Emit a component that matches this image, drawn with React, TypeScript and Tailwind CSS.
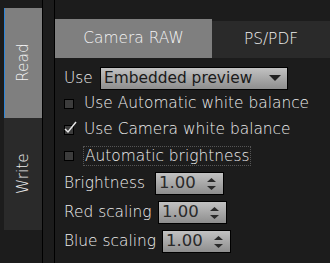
import React from 'react';

const font = { fontFamily: '"DejaVu Sans", sans-serif' };

function Check({ checked = false }: { checked?: boolean }) {
  return (
    <span className="relative w-[10px] h-[10px] bg-[#3c3c3c] border border-black shrink-0">
      {checked && (
        <svg className="absolute -left-[2px] -top-[5px]" width="15" height="14" viewBox="0 0 15 14">
          <path d="M2 8 L5 11 L13 1" fill="none" stroke="#e8e8e8" strokeWidth="1.5" />
        </svg>
      )}
    </span>
  );
}

function Spin({ value }: { value: string }) {
  return (
    <div className="flex items-center w-[69px] h-[23px] shrink-0 border border-black bg-gradient-to-b from-[#c2c2c2] to-[#8e8e8e] pl-[3px] pr-[6px] text-[#2a2a2a] text-[16.5px] font-normal">
      <span className="flex-1 leading-none">{value}</span>
      <svg width="11" height="14" viewBox="0 0 11 14">
        <path d="M1 5 L5.5 1 L10 5 Z" fill="#2a2a2a" />
        <path d="M1 9 L5.5 13 L10 9 Z" fill="#2a2a2a" />
      </svg>
    </div>
  );
}

export default function App() {
  return (
    <div className="w-[330px] h-[263px] bg-[#1c1c1c] flex text-[15.4px] font-extralight text-[#efefef] overflow-hidden" style={font}>
      {/* side tabs */}
      <div className="w-[43px] pl-[4px] pt-[8px] flex flex-col border-r border-black">
        <div className="h-[110px] bg-[#7f7f7f] border-l border-[#2f86d8] flex items-center justify-center">
          <span className="-rotate-90 whitespace-nowrap text-[#f2f2f2]">Read</span>
        </div>
        <div className="h-[112px] bg-[#2a2a2a] flex items-center justify-center">
          <span className="-rotate-90 whitespace-nowrap text-[#ececec]">Write</span>
        </div>
      </div>

      <div className="w-[11px]" />

      {/* main panel */}
      <div className="flex-1 flex flex-col border-l border-black pt-[19px]">
        <div className="flex h-[39px]">
          <div className="w-[157px] bg-[#7f7f7f] flex items-center justify-center text-[#f4f4f4]">Camera RAW</div>
          <div className="flex-1 mt-[2px] bg-[#2a2a2a] flex items-center justify-center">PS/PDF</div>
        </div>

        <div className="pl-[9px] pt-[9px] flex flex-col">
          <div className="flex items-center h-[23px]">
            <span className="w-[36px]">Use</span>
            <div className="flex items-center w-[188px] h-[23px] shrink-0 border border-black bg-gradient-to-b from-[#c2c2c2] to-[#8e8e8e] pl-[3px] pr-[6px] text-[#1a1a1a] font-normal">
              <span className="flex-1 leading-none">Embedded preview</span>
              <svg width="12" height="7" viewBox="0 0 12 7">
                <path d="M0 0 L12 0 L6 6 Z" fill="#222" />
              </svg>
            </div>
          </div>

          <div className="flex items-center gap-[10px] h-[26px] mt-[1px]">
            <Check />
            <span>Use Automatic white balance</span>
          </div>
          <div className="flex items-center gap-[10px] h-[26px]">
            <Check checked />
            <span>Use Camera white balance</span>
          </div>
          <div className="flex items-center gap-[9px] h-[25px]">
            <Check />
            <span className="border border-dotted border-[#555] px-[1px] leading-[18px]">Automatic brightness</span>
          </div>

          <div className="flex items-center h-[29px] mt-[1px]">
            <span className="w-[91px]">Brightness</span>
            <Spin value="1.00" />
          </div>
          <div className="flex items-center h-[29px]">
            <span className="w-[94px]">Red scaling</span>
            <Spin value="1.00" />
          </div>
          <div className="flex items-center h-[29px]">
            <span className="w-[98px] whitespace-nowrap">Blue scaling</span>
            <Spin value="1.00" />
          </div>
        </div>
      </div>
    </div>
  );
}
